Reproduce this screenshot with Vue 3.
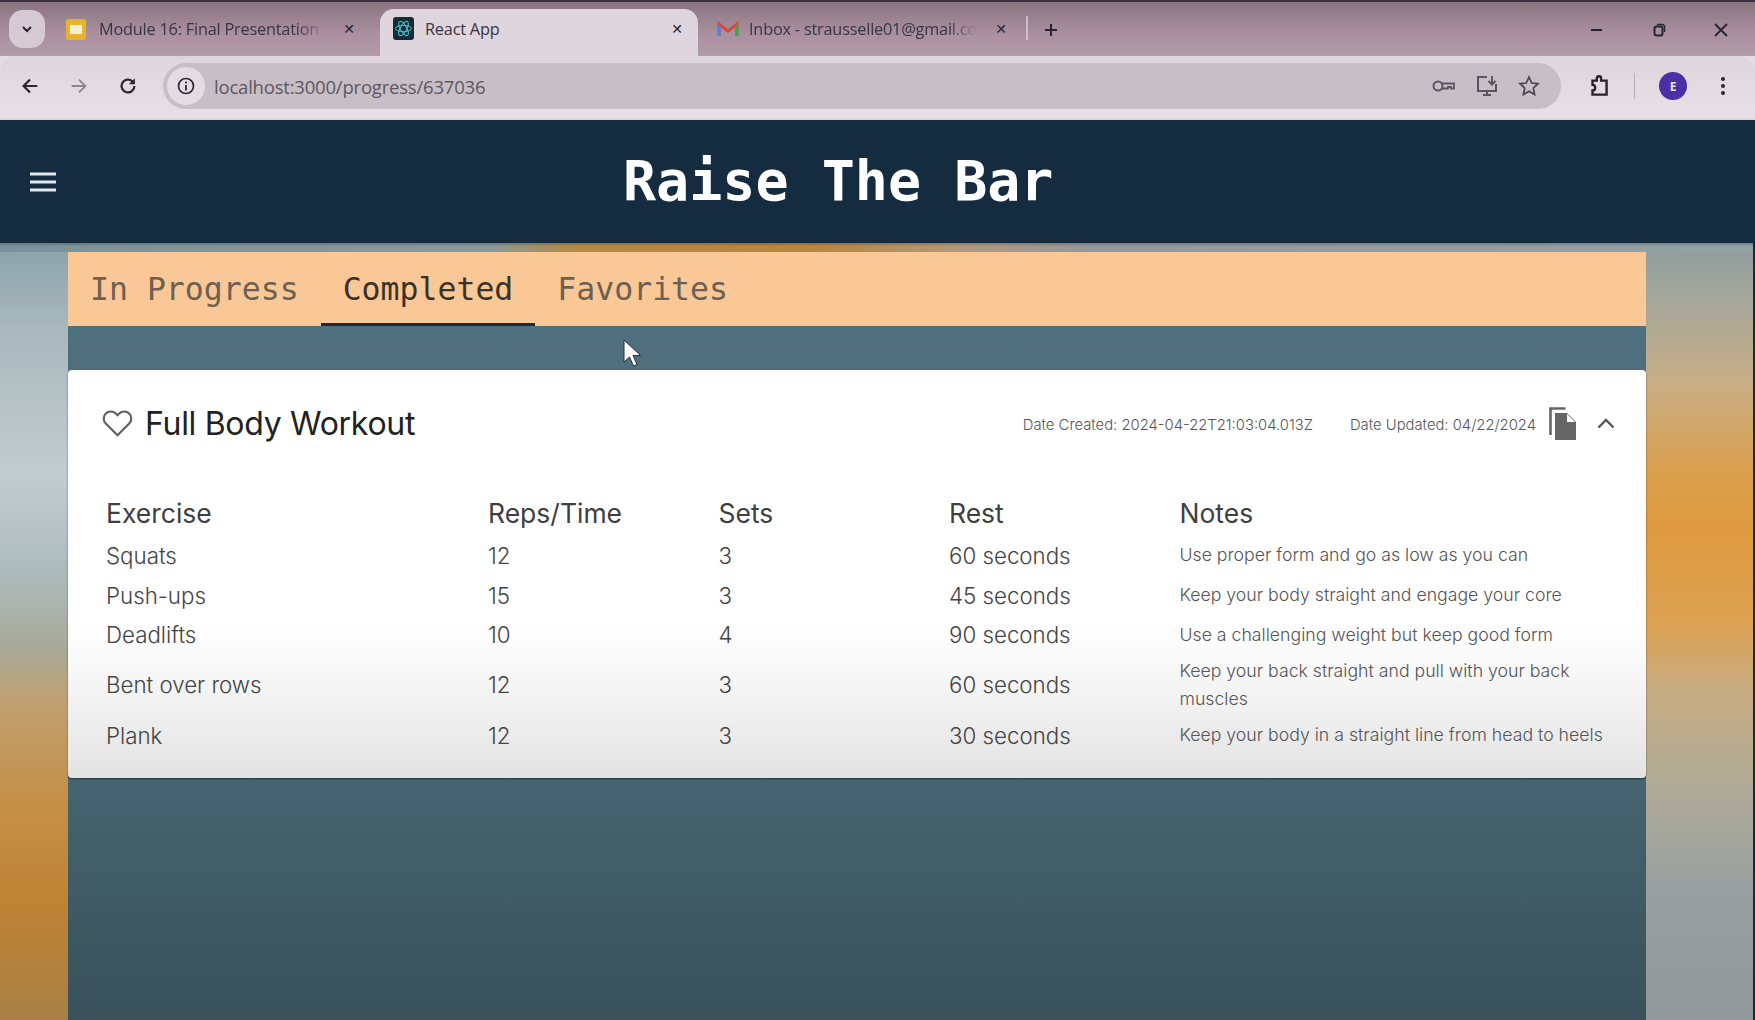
<script setup>
const columns = ['Exercise', 'Reps/Time', 'Sets', 'Rest', 'Notes']
const rows = [
  { name: 'Squats', reps: 12, sets: 3, rest: '60 seconds', notes: 'Use proper form and go as low as you can', h: 40 },
  { name: 'Push-ups', reps: 15, sets: 3, rest: '45 seconds', notes: 'Keep your body straight and engage your core', h: 40 },
  { name: 'Deadlifts', reps: 10, sets: 4, rest: '90 seconds', notes: 'Use a challenging weight but keep good form', h: 39 },
  { name: 'Bent over rows', reps: 12, sets: 3, rest: '60 seconds', notes: 'Keep your back straight and pull with your back muscles', h: 61 },
  { name: 'Plank', reps: 12, sets: 3, rest: '30 seconds', notes: 'Keep your body in a straight line from head to heels', h: 40 }
]
</script>

<template>
  <div class="page">
    <div class="chrome">
      <div class="tabstrip">
        <div class="tab-search">
          <svg width="14" height="14" viewBox="0 0 14 14"><path d="M3 5l4 4 4-4" fill="none" stroke="#2a2430" stroke-width="2"/></svg>
        </div>
        <div class="tab inactive first">
          <svg class="fav" width="22" height="23" viewBox="0 0 22 23"><rect x="1" y="1" width="20" height="21" rx="3" fill="#e8b32c"/><rect x="5" y="7" width="12" height="9" fill="#f6efd8"/></svg>
          <span class="tab-title fade">Module 16: Final Presentation</span>
          <span class="x">✕</span>
        </div>
        <div class="tab active">
          <svg class="fav" width="21" height="23" viewBox="0 0 21 23"><rect x="0" y="0" width="21" height="23" rx="3" fill="#152c36"/><g fill="none" stroke="#4fc6d8" stroke-width="1"><ellipse cx="10.500" cy="11.500" rx="8" ry="3.200"/><ellipse cx="10.500" cy="11.500" rx="8" ry="3.200" transform="rotate(60 10.500 11.500)"/><ellipse cx="10.500" cy="11.500" rx="8" ry="3.200" transform="rotate(120 10.500 11.500)"/></g></svg>
          <span class="tab-title">React App</span>
          <span class="x">✕</span>
        </div>
        <div class="tab inactive third">
          <svg class="fav" width="22" height="17" viewBox="0 0 22 17"><path d="M2 15V3l9 7 9-7v12" fill="none" stroke="#d9483b" stroke-width="3"/><path d="M2 15V5" stroke="#4a86e8" stroke-width="3"/><path d="M20 15V5" stroke="#34a853" stroke-width="3"/></svg>
          <span class="tab-title fade">Inbox - strausselle01@gmail.com</span>
          <span class="x">✕</span>
        </div>
        <div class="tab-sep"></div>
        <svg class="plus" width="16" height="16" viewBox="0 0 16 16"><path d="M8 2v12M2 8h12" stroke="#2a2430" stroke-width="2"/></svg>
        <div class="win">
          <svg width="16" height="16" viewBox="0 0 16 16"><path d="M2 8h11" stroke="#2a2430" stroke-width="2"/></svg>
          <svg width="16" height="16" viewBox="0 0 16 16"><rect x="3.500" y="4.500" width="8" height="9" rx="2" fill="none" stroke="#2a2430" stroke-width="2"/><path d="M6 2.500h6l1.500 1.500v6" fill="none" stroke="#2a2430" stroke-width="1.500"/></svg>
          <svg width="16" height="16" viewBox="0 0 16 16"><path d="M2 2l12 12M14 2L2 14" stroke="#2a2430" stroke-width="1.800"/></svg>
        </div>
      </div>
      <div class="toolbar">
        <svg class="nav" width="22" height="22" viewBox="0 0 24 24"><path d="M20 12H5M12 5l-7 7 7 7" fill="none" stroke="#2a2630" stroke-width="2.400"/></svg>
        <svg class="nav" width="22" height="22" viewBox="0 0 24 24"><path d="M4 12h15M12 5l7 7-7 7" fill="none" stroke="#8d8690" stroke-width="2"/></svg>
        <svg class="nav" width="22" height="22" viewBox="0 0 24 24"><path d="M19 12a7 7 0 1 1-2.200-5.100L19 9" fill="none" stroke="#2a2630" stroke-width="2.400"/><path d="M19.500 3.500V10H13z" fill="#2a2630"/></svg>
        <div class="omnibox">
          <div class="info">
            <svg width="20" height="20" viewBox="0 0 20 20"><circle cx="10" cy="10" r="7.500" fill="none" stroke="#2c2830" stroke-width="1.700"/><path d="M10 9v5.500M10 5.500v2" stroke="#2c2830" stroke-width="1.800"/></svg>
          </div>
          <span class="url">localhost:3000/progress/637036</span>
          <div class="omni-icons">
            <svg width="26" height="22" viewBox="0 0 26 22"><circle cx="7" cy="11" r="4.500" fill="none" stroke="#5a5560" stroke-width="2"/><path d="M11 8.500h12v5h-3v-1.500h-3v1.500h-6" fill="none" stroke="#5a5560" stroke-width="1.800"/></svg>
            <svg width="24" height="24" viewBox="0 0 24 24"><path d="M12 3H3v14h18V10M8 21h8M12 17v4" fill="none" stroke="#5a5560" stroke-width="2"/><path d="M17 2v8M13.500 7l3.500 3.500L20.500 7" fill="none" stroke="#5a5560" stroke-width="2"/></svg>
            <svg width="24" height="24" viewBox="0 0 24 24"><path d="M12 3l2.700 6 6.300.7-4.700 4.300 1.300 6.500L12 17.200 6.400 20.500 7.700 14 3 9.700 9.300 9z" fill="none" stroke="#4a4550" stroke-width="1.700"/></svg>
          </div>
        </div>
        <svg class="ext" width="26" height="26" viewBox="0 0 24 24"><path d="M6 7h4V5a2 2 0 0 1 4 0v2h5v13H6v-4a2.500 2.500 0 0 0 0-5z" fill="none" stroke="#26222a" stroke-width="2.200"/></svg>
        <div class="tool-sep"></div>
        <div class="avatar">E</div>
        <svg class="more" width="6" height="20" viewBox="0 0 6 20"><circle cx="3" cy="3" r="2" fill="#2a2630"/><circle cx="3" cy="10" r="2" fill="#2a2630"/><circle cx="3" cy="17" r="2" fill="#2a2630"/></svg>
      </div>
    </div>

    <header class="appbar">
      <svg class="burger" width="26" height="20" viewBox="0 0 26 20"><path d="M0 2h26M0 10h26M0 18h26" stroke="#dfe7ea" stroke-width="3"/></svg>
      <h1 class="brand">Raise The Bar</h1>
    </header>

    <main class="stage">
      <div class="panel">
        <nav class="tabs">
          <div class="mtab">In Progress</div>
          <div class="mtab selected">Completed</div>
          <div class="mtab">Favorites</div>
        </nav>
        <section class="card">
          <div class="card-head">
            <svg class="heart" width="29" height="25" viewBox="2 3.500 20 17.500"><path d="M12 20.500 3.800 12.300a5 5 0 0 1 0-7 5 5 0 0 1 7 0L12 6.500l1.200-1.200a5 5 0 0 1 7 0 5 5 0 0 1 0 7z" fill="none" stroke="#5f5f5f" stroke-width="1.500"/></svg>
            <h2 class="title">Full Body Workout</h2>
            <span class="date first-date">Date Created: 2024-04-22T21:03:04.013Z</span>
            <span class="date">Date Updated: 04/22/2024</span>
            <svg class="copy" width="27" height="33" viewBox="0 0 27 33"><path d="M1.500 28V1.500h15" fill="none" stroke="#666" stroke-width="2.600"/><path d="M6 6h12l9 9v18H6z" fill="#666"/><path d="M18 7v8h8z" fill="#fff"/></svg>
            <svg class="chev" width="18" height="11" viewBox="0 0 18 11"><path d="M1.500 9.500 9 2l7.500 7.500" fill="none" stroke="#555" stroke-width="2.400"/></svg>
          </div>
          <table class="grid">
            <thead>
              <tr><th v-for="c in columns" :key="c">{{ c }}</th></tr>
            </thead>
            <tbody>
              <tr v-for="r in rows" :key="r.name" :style="{ height: r.h + 'px' }">
                <td>{{ r.name }}</td>
                <td>{{ r.reps }}</td>
                <td>{{ r.sets }}</td>
                <td>{{ r.rest }}</td>
                <td class="notes">{{ r.notes }}</td>
              </tr>
            </tbody>
          </table>
        </section>
      </div>
      <svg class="cursor" width="20" height="30" viewBox="0 0 20 30"><path d="M2 1v22l5.500-5 4 9 3.500-1.500-4-9h7.500z" fill="#fff" stroke="#26343c" stroke-width="1"/></svg>
    </main>
  </div>
</template>

<style>
html, body { margin: 0; background: #3a525b; }
</style>

<style scoped>
.page {
  width: 1755px;
  height: 1020px;
  overflow: hidden;
  display: flex;
  flex-direction: column;
  font-family: "Open Sans", "Liberation Sans", sans-serif;
  filter: blur(0.4px);
}
.chrome { height: 120px; flex: none; background: #e6dde3; }
.tabstrip {
  height: 54px;
  border-top: 2px solid #3a2f3c;
  background: linear-gradient(180deg, #8a7480 0%, #ab919f 60%, #b29aa7 100%);
  display: flex;
  align-items: flex-end;
}
.tab-search {
  width: 36px;
  height: 38px;
  margin: 0 0 8px 9px;
  border-radius: 14px;
  background: #d6cbd2;
  display: flex;
  align-items: center;
  justify-content: center;
  flex: none;
}
.tab {
  height: 46px;
  display: flex;
  align-items: center;
  font-size: 16.300px;
  color: #3a3440;
  flex: none;
  box-sizing: border-box;
}
.tab.first { width: 335px; padding: 0 0 8px 20px; }
.tab.active {
  width: 318px;
  padding: 0 11px 8px 13px;
  background: #dfd5dc;
  border-radius: 14px 14px 0 0;
  height: 47px;
}
.tab.third { width: 326px; padding: 0 13px 8px 19px; }
.fav { flex: none; margin-right: 12px; }
.tab.active .fav { margin-right: 11px; }
.tab.third .fav { margin-right: 10px; }
.tab-title { flex: 1; white-space: nowrap; overflow: hidden; letter-spacing: -0.2px; }
.fade { -webkit-mask-image: linear-gradient(90deg, #000 88%, transparent 100%); mask-image: linear-gradient(90deg, #000 88%, transparent 100%); }
.x { flex: none; width: 20px; margin-left: 14px; font-size: 14px; font-weight: 700; text-align: center; color: #2a2430; font-family: "DejaVu Sans", sans-serif; }
.tab.first .x { margin-right: 21px; }
.tab-sep { width: 2px; height: 24px; background: #cdbfc8; margin: 0 0 16px 2px; flex: none; }
.plus { margin: 0 0 18px 15px; flex: none; }
.win { margin: 0 26px 18px auto; display: flex; gap: 46px; }
.toolbar {
  height: 62px;
  box-sizing: border-box;
  display: flex;
  align-items: center;
  padding: 0 29px 2px 19px;
  background: linear-gradient(180deg, #dfd5dc, #e8e0e6);
  border-radius: 16px 16px 0 0;
}
.nav { flex: none; margin-right: 27px; }
.nav:nth-of-type(3) { margin-right: 23px; }
.omnibox {
  flex: 1;
  height: 46px;
  border-radius: 23px;
  background: #c8bfc6;
  display: flex;
  align-items: center;
  margin-left: 1px;
  padding-right: 20px;
}
.info {
  width: 38px;
  height: 38px;
  border-radius: 50%;
  background: #e4dce2;
  margin-left: 4px;
  display: flex;
  align-items: center;
  justify-content: center;
  flex: none;
}
.url { font-size: 18.500px; color: #5d5761; margin-left: 9px; letter-spacing: -0.2px; }
.omni-icons { margin-left: auto; display: flex; align-items: center; gap: 18px; }
.ext { margin-left: 25px; flex: none; }
.tool-sep { width: 1px; height: 26px; background: #b9aeb6; margin-left: 22px; flex: none; }
.avatar {
  width: 28px;
  height: 28px;
  margin-left: 24px;
  border-radius: 50%;
  background: #4a2fa6;
  color: #e9e4f5;
  font-size: 12px;
  font-weight: 700;
  display: flex;
  align-items: center;
  justify-content: center;
  flex: none;
}
.more { margin-left: 33px; flex: none; }
.appbar {
  height: 123px;
  flex: none;
  display: flex;
  align-items: center;
  background: #152b3f;
  padding-left: 30px;
  box-shadow: 0 1px 3px rgba(0,0,0,.3);
  position: relative;
  z-index: 1;
}
.burger { flex: none; }
.brand {
  margin: 0 0 0 567px;
  font: 700 55px/1 "DejaVu Sans Mono", monospace;
  color: #fff;
  white-space: nowrap;
}
.stage {
  flex: 1;
  position: relative;
  padding-top: 9px;
  border-right: 2px solid #20262b;
  background:
    linear-gradient(90deg, #7a929a 0%, #8a9a9c 28%, #b58a45 33%, #b8863c 46%, #b09a80 55%, #93999c 62%, #93a2a6 100%) left top / 100% 9px no-repeat,
    linear-gradient(180deg, #8ba2aa 0%, #a8b8bd 11%, #c3ccd0 30%, #aebcc0 41%, #a8aa9a 52%, #c0a070 59%, #c49048 72%, #be8334 85%, #a98045 100%) left top / 80px 100% no-repeat,
    linear-gradient(180deg, #8f9c9e 0%, #a5a79c 7%, #c8ae85 18%, #dc9f4c 30%, #de9a3f 37%, #dda253 49%, #c8ab80 57%, #b0ab98 70%, #98a0a0 83%, #939899 100%) right top / 115px 100% no-repeat,
    #3a525b;
}
.panel {
  margin: 0 107px 0 68px;
  height: 100%;
  background: linear-gradient(180deg, #50727e 0%, #466671 68%, #42606a 75%, #3a515a 100%);
}
.tabs {
  height: 74px;
  background: #f9c896;
  display: flex;
  font: 31.500px/1 "DejaVu Sans Mono", monospace;
  color: #6d6052;
}
.mtab { padding: 2px 22px 0; display: flex; align-items: center; white-space: nowrap; box-sizing: border-box; }
.mtab.selected { color: #3a3228; border-bottom: 3px solid #1f2a33; padding-top: 5px; }
.card {
  margin-top: 44px;
  height: 408px;
  box-sizing: border-box;
  border-radius: 4px;
  background: linear-gradient(180deg, #fff 0%, #fff 62%, #f6f6f6 76%, #e3e3e4 100%);
  box-shadow: 0 1px 2px rgba(0,0,0,.5);
  padding: 0 26px 0 38px;
}
.card-head { height: 104px; box-sizing: border-box; display: flex; align-items: center; padding: 3px 5px 0 0; }
.heart { flex: none; margin-left: -3px; overflow: visible; }
.title { margin: 0 0 0 13px; font-family: "Inter", sans-serif; font-weight: 400; font-size: 32px; letter-spacing: -0.3px; color: #222; white-space: nowrap; }
.date { font-family: "Inter", sans-serif; font-weight: 300; font-size: 14.800px; color: #555; white-space: nowrap; margin-top: 2px; }
.first-date { margin-left: auto; margin-right: 37px; }
.copy { flex: none; margin-left: 13px; }
.chev { flex: none; margin: 0 0 0 21px; }
.grid {
  width: 100%;
  margin-top: 17px;
  border-collapse: collapse;
  table-layout: fixed;
  font-family: "Inter", sans-serif;
}
th {
  height: 44px;
  padding: 0;
  text-align: left;
  font-weight: 400;
  font-size: 26.500px;
  color: #3f3f3f;
}
th:nth-child(1) { width: 382px; }
th:nth-child(2), th:nth-child(3), th:nth-child(4) { width: 230.500px; }
td { padding: 0; font-size: 22.300px; font-weight: 300; color: #444; vertical-align: middle; }
td.notes { font-size: 17.700px; line-height: 28px; color: #555; }
.cursor { position: absolute; left: 622px; top: 96px; }
</style>
